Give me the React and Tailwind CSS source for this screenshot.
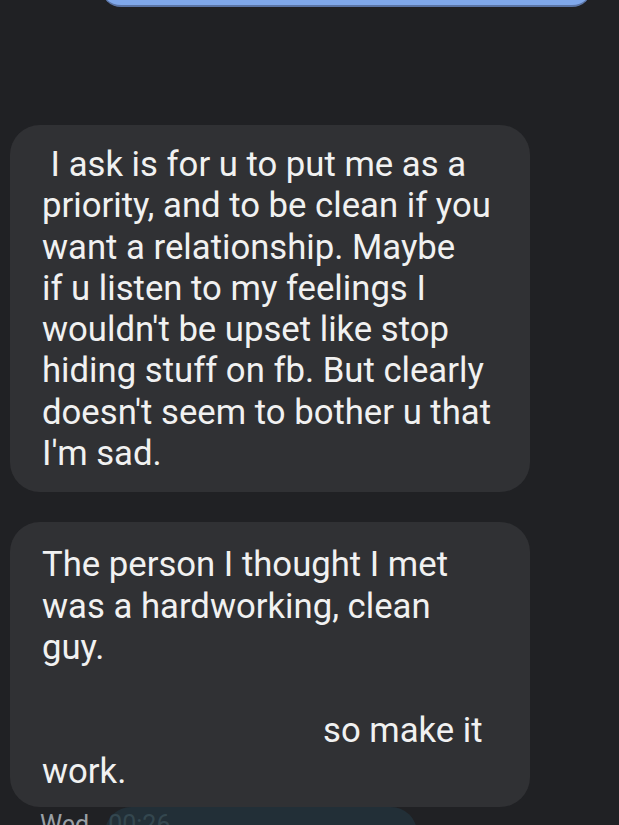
import React from "react";

const lines1 = [
  "\u00a0I ask is for u to put me as a",
  "priority, and to be clean if you",
  "want a relationship. Maybe",
  "if u listen to my feelings I",
  "wouldn't be upset like stop",
  "hiding stuff on fb. But clearly",
  "doesn't seem to bother u that",
  "I'm sad.",
];

export default function App() {
  return (
    <div
      className="w-[619px] h-[825px] overflow-hidden bg-[#202124] flex flex-col"
      style={{ fontFamily: "Roboto, 'Liberation Sans', sans-serif" }}
    >
      {/* top outgoing bubble (cut off) */}
      <div className="ml-[101px] w-[491px] h-[40px] -mt-[33px] shrink-0 rounded-[22px] bg-[#80a8ea] border-b-[2px] border-[#5b75a6]" />

      {/* bubble 1 */}
      <div className="mt-[118px] ml-[10px] w-[520px] shrink-0 rounded-[30px] bg-[#303134] pt-[19px] pb-[18px] pl-[32px] text-[34.7px] leading-[41.3px] text-[#f1f1f1]">
        {lines1.map((l, i) => (
          <div key={i} className="whitespace-pre">{l}</div>
        ))}
      </div>

      {/* bubble 2 */}
      <div className="mt-[30px] ml-[10px] w-[520px] shrink-0 rounded-[30px] bg-[#303134] pt-[22px] pb-[15px] pl-[32px] text-[34.7px] leading-[41.3px] text-[#f1f1f1]">
        <div className="whitespace-pre">The person I thought I met</div>
        <div className="whitespace-pre">was a hardworking, clean</div>
        <div>guy.</div>
        <div className="h-[41.3px]" />
        <div className="pl-[281px] whitespace-pre">so make it</div>
        <div>work.</div>
      </div>

      {/* bottom row */}
      <div className="flex items-start shrink-0">
        <div className="pl-[40px] pt-[5px] text-[25px] leading-none text-[#9aa0a6]">Wed</div>
        <div className="ml-[16px] w-[312px] h-[40px] rounded-t-[26px] bg-[#222f37] pt-[5px] pl-[3px] text-[25px] leading-none text-[#34474f]">
          00:26
        </div>
      </div>
    </div>
  );
}
